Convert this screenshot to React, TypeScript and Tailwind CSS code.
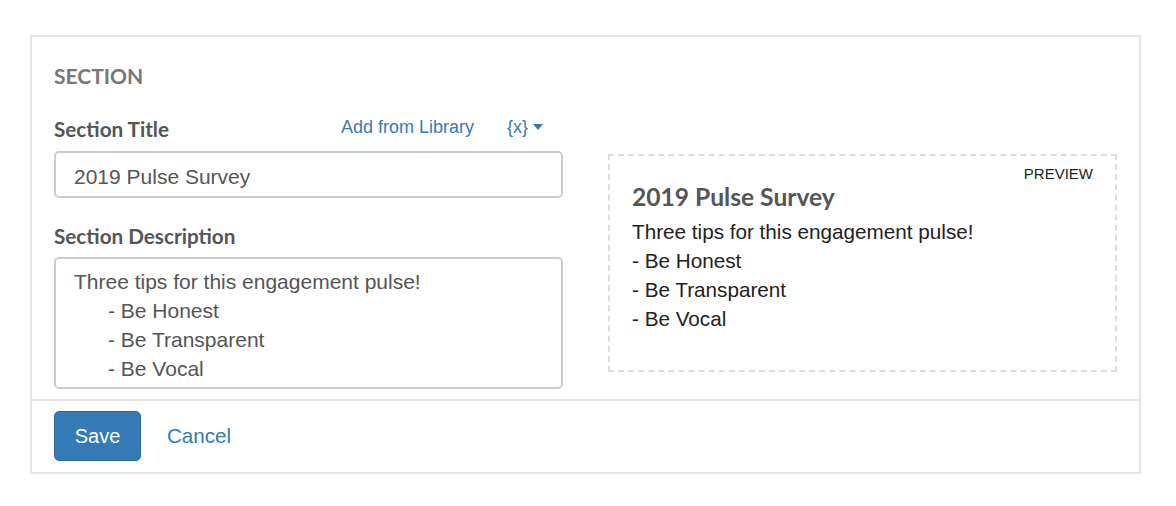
import React from 'react';

const lato = "font-['Lato','Open_Sans',sans-serif]";
const arial = "font-['Liberation_Sans',Arial,sans-serif]";

const App: React.FC = () => {
  return (
    <div className="w-[1176px] h-[506px] bg-white pt-[35px] pl-[30px]">
      <div className="w-[1111px] border-2 border-[#e5e5e5] bg-white">
        <div className="px-[22px] pt-[27px] pb-[10px]">
          <h3 className={`${lato} font-bold text-[21px] leading-[24px] h-[24px] text-[#777]`}>SECTION</h3>

          <div className="mt-[30px] flex gap-[45px]">
            <div className="w-[509px]">
              <div className="flex h-[24px] items-center">
                <label className={`${lato} font-bold text-[20.7px] text-[#555]`}>Section Title</label>
                <div className={`${arial} ml-auto flex items-center pr-[20px] text-[18px] text-[#337ab7] -mt-[6px]`}>
                  <span>Add from Library</span>
                  <span className="ml-[33px]">{'{x}'}</span>
                  <svg width="10" height="6" viewBox="0 0 10 6" className="ml-[5px]">
                    <path d="M0 0h10L5 6z" fill="#337ab7" />
                  </svg>
                </div>
              </div>
              <input
                readOnly
                defaultValue="2019 Pulse Survey"
                className={`${arial} mt-[9px] block h-[47px] w-full rounded-[5px] border-2 border-[#ccc] px-[18px] pt-[4px] text-[21px] text-[#555] outline-none`}
              />

              <label className={`${lato} mt-[26px] block h-[24px] font-bold text-[20.7px] leading-[24px] text-[#555]`}>
                Section Description
              </label>
              <div
                className={`${arial} mt-[9px] h-[132px] w-full rounded-[5px] border-2 border-[#ccc] pl-[18px] pt-[8px] text-[21px] leading-[29px] text-[#555]`}
              >
                <div>Three tips for this engagement pulse!</div>
                <div className="pl-[34px]">- Be Honest</div>
                <div className="pl-[34px]">- Be Transparent</div>
                <div className="pl-[34px]">- Be Vocal</div>
              </div>
            </div>

            <div className="w-[509px] pt-[36px]">
              <div className="relative h-[218px] border-2 border-dashed border-[#ddd] pl-[22px] pt-[26px]">
                <span className={`${arial} absolute right-[22px] top-[8px] text-[15px] leading-[20px] text-[#222]`}>PREVIEW</span>
                <div className={`${lato} font-bold text-[24.6px] leading-[30px] text-[#555]`}>2019 Pulse Survey</div>
                <div className={`${arial} mt-[5px] text-[20.7px] leading-[29px] text-[#222]`}>
                  <div>Three tips for this engagement pulse!</div>
                  <div>- Be Honest</div>
                  <div>- Be Transparent</div>
                  <div>- Be Vocal</div>
                </div>
              </div>
            </div>
          </div>
        </div>

        <div className="flex items-center border-t-2 border-[#e5e5e5] px-[22px] pt-[10px] pb-[11px]">
          <button
            className={`${arial} h-[50px] w-[87px] rounded-[5px] border border-[#2e6da4] bg-[#337ab7] text-[20px] text-white`}
          >
            Save
          </button>
          <button className={`${arial} ml-[26px] text-[20.6px] text-[#337ab7]`}>Cancel</button>
        </div>
      </div>
    </div>
  );
};

export default App;
